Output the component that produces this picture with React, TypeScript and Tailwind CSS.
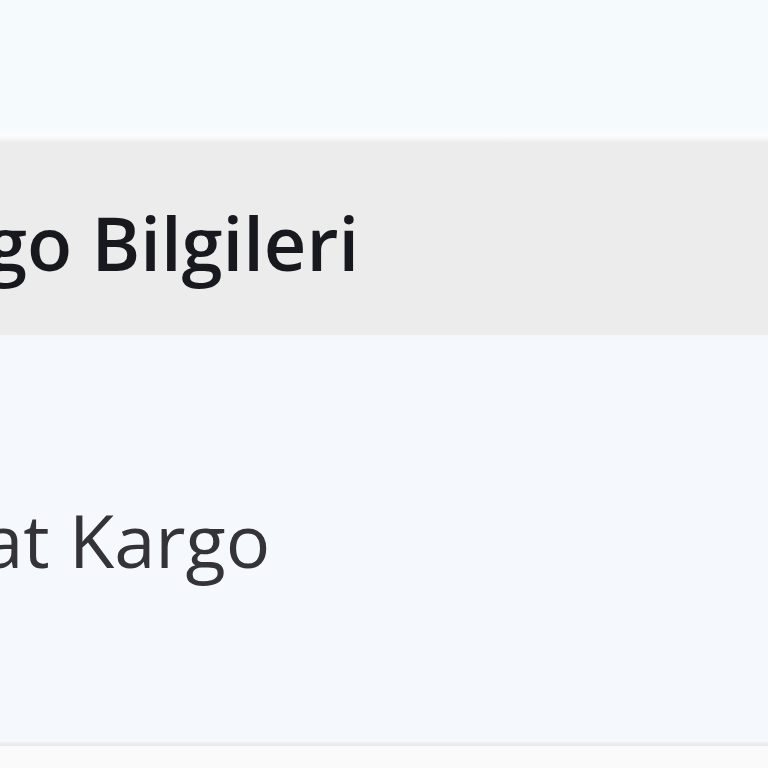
export default function App() {
  return (
    <div className="w-[768px] h-[768px] overflow-hidden bg-[#f5f9fd] flex flex-col font-['Open_Sans',sans-serif]">
      {/* top spacer */}
      <div className="h-[128px] shrink-0 bg-[#f5fafc]" />
      <div className="h-[15px] shrink-0 bg-gradient-to-b from-[#f5fafc] via-[#fdfdfe] to-[#ececec]" />

      {/* section header */}
      <div className="h-[192px] shrink-0 bg-[#ececec] pt-[63px]">
        <h2 className="ml-[-136px] text-[74px] leading-none font-semibold text-[#18181f] whitespace-nowrap">
          Kargo Bilgileri
        </h2>
      </div>
      <div className="h-[6px] shrink-0 bg-gradient-to-b from-[#f3f5f7] to-[#f5f9fd]" />

      {/* value row */}
      <div className="h-[401px] shrink-0 pt-[162px]">
        <p className="ml-[-134px] text-[74px] leading-none text-[#333338] whitespace-nowrap">Sürat Kargo</p>
      </div>

      <div className="h-[4px] shrink-0 bg-gradient-to-b from-[#f0f1f4] to-[#e8e8ec]" />
      <div className="flex-1 bg-[#fafafa]" />
    </div>
  );
}
